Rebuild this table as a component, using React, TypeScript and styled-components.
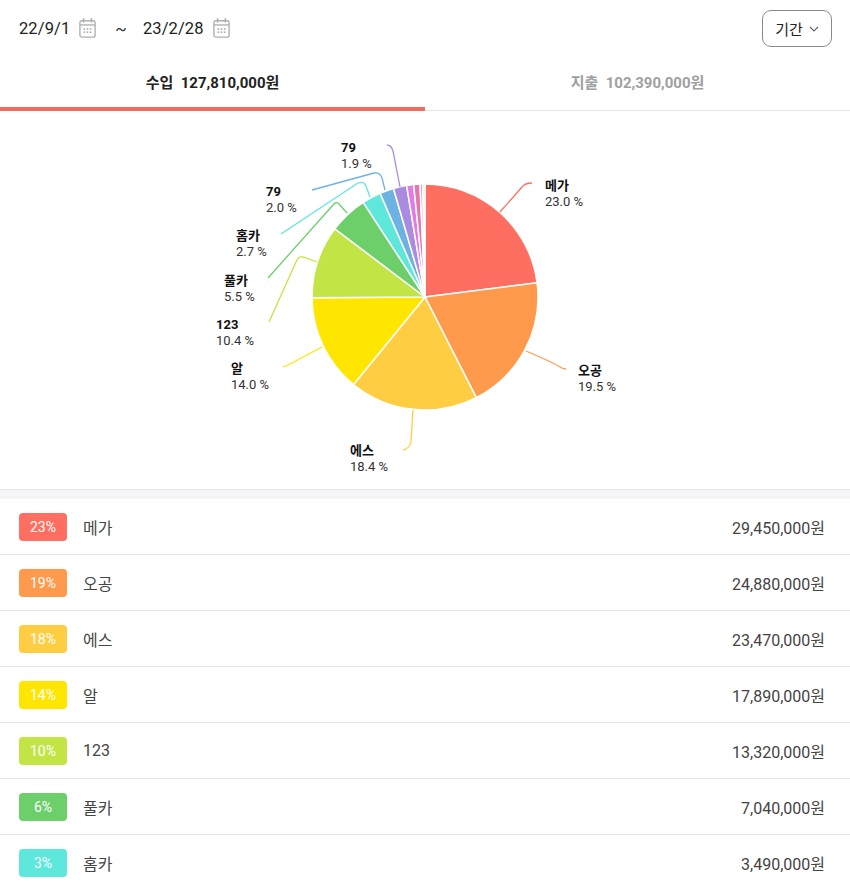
import styled, { createGlobalStyle } from 'styled-components';

const GlobalStyle = createGlobalStyle`
  html, body {
    margin: 0;
    padding: 0;
    background: #ffffff;
  }
  body {
    font-family: Roboto, "Noto Sans CJK KR", "Noto Sans", sans-serif;
    color: #222;
  }
  * { box-sizing: border-box; }
`;

type Item = {
  name: string;
  pct: number;
  amount: string;
  color: string;
};

const CX = 425;
const CY = 297;
const R = 113;

const slices: { pct: number; color: string }[] = [
  { pct: 23.0, color: '#ff6f61' },
  { pct: 19.5, color: '#ff994c' },
  { pct: 18.4, color: '#ffcd42' },
  { pct: 14.0, color: '#ffe600' },
  { pct: 10.4, color: '#c2e545' },
  { pct: 5.5, color: '#6ccf6a' },
  { pct: 2.7, color: '#5ee7db' },
  { pct: 2.0, color: '#6cb3e3' },
  { pct: 1.9, color: '#a98be0' },
  { pct: 1.0, color: '#e27be4' },
  { pct: 0.9, color: '#e07aae' },
  { pct: 0.4, color: '#f0a3b8' },
  { pct: 0.3, color: '#f7c6c6' },
];

const labels = [
  { name: '메가', pct: '23.0 %', x: 545, y: 185, color: '#ff6f61', d: 'M500,212 L522,187 Q525,183 532,183' },
  { name: '오공', pct: '19.5 %', x: 578, y: 370, color: '#ff994c', d: 'M526,351 Q552,362 560,367 Q563,369 566,369' },
  { name: '에스', pct: '18.4 %', x: 350, y: 450, color: '#ffcd42', d: 'M413,410 L411,442 Q410,448 403,450' },
  { name: '알', pct: '14.0 %', x: 231, y: 368, color: '#ffe600', d: 'M322,347 L290,364 Q286,366 283,367' },
  { name: '123', pct: '10.4 %', x: 216, y: 324, color: '#c2e545', d: 'M317,262 L303,257 Q298,256 296,262 L269,322' },
  { name: '풀카', pct: '5.5 %', x: 224, y: 280, color: '#6ccf6a', d: 'M347,213 L339,204 Q336,201 333,205 L268,278' },
  { name: '홈카', pct: '2.7 %', x: 236, y: 235, color: '#5ee7db', d: 'M370,197 L366,186 Q364,181 358,183 L281,234' },
  { name: '79', pct: '2.0 %', x: 266, y: 191, color: '#6cb3e3', d: 'M385,190 L382,178 Q380,172 374,173 L312,190' },
  { name: '79', pct: '1.9 %', x: 341, y: 147, color: '#a98be0', d: 'M400,187 L393,151 Q391,145 387,145' },
];

const items: Item[] = [
  { name: '메가', pct: 23, amount: '29,450,000원', color: '#ff6f61' },
  { name: '오공', pct: 19, amount: '24,880,000원', color: '#ff994c' },
  { name: '에스', pct: 18, amount: '23,470,000원', color: '#ffcd42' },
  { name: '알', pct: 14, amount: '17,890,000원', color: '#ffe600' },
  { name: '123', pct: 10, amount: '13,320,000원', color: '#c2e545' },
  { name: '풀카', pct: 6, amount: '7,040,000원', color: '#6ccf6a' },
  { name: '홈카', pct: 3, amount: '3,490,000원', color: '#5ee7db' },
];

const point = (frac: number) => {
  const a = frac * Math.PI * 2;
  return [CX + R * Math.sin(a), CY - R * Math.cos(a)];
};

const slicePath = (from: number, to: number) => {
  const [x1, y1] = point(from);
  const [x2, y2] = point(to);
  const large = to - from > 0.5 ? 1 : 0;
  return `M${CX},${CY} L${x1},${y1} A${R},${R} 0 ${large} 1 ${x2},${y2} Z`;
};

const CalendarIcon = () => (
  <svg width="17" height="20" viewBox="0 0 16 19" fill="none">
    <rect x="0.8" y="2.6" width="14.4" height="15.6" rx="1.8" stroke="#b0b0b0" strokeWidth="1.3" />
    <line x1="0.8" y1="6.6" x2="15.2" y2="6.6" stroke="#b0b0b0" strokeWidth="1.3" />
    <line x1="4.3" y1="0.8" x2="4.3" y2="3.8" stroke="#b0b0b0" strokeWidth="1.5" strokeLinecap="round" />
    <line x1="11.7" y1="0.8" x2="11.7" y2="3.8" stroke="#b0b0b0" strokeWidth="1.5" strokeLinecap="round" />
    {[5, 8, 11].map((x) =>
      [10.5, 13.5].map((y) => <rect key={`${x}-${y}`} x={x - 0.8} y={y - 0.8} width="1.6" height="1.6" fill="#b0b0b0" />)
    )}
  </svg>
);

const Chevron = () => (
  <svg width="10" height="6" viewBox="0 0 10 6" fill="none">
    <path d="M1 1 L5 5 L9 1" stroke="#666" strokeWidth="1.1" />
  </svg>
);

const App = () => {
  let acc = 0;
  return (
    <Page>
      <GlobalStyle />
      <Header>
        <DateGroup>
          <DateText>22/9/1</DateText>
          <CalendarIcon />
          <Tilde>~</Tilde>
          <DateText>23/2/28</DateText>
          <CalendarIcon />
        </DateGroup>
        <PeriodButton>
          기간 <Chevron />
        </PeriodButton>
      </Header>
      <Tabs>
        <Tab $active>수입&nbsp;&nbsp;127,810,000원</Tab>
        <Tab>지출&nbsp;&nbsp;102,390,000원</Tab>
      </Tabs>
      <ChartArea>
        <svg width="850" height="378" viewBox="0 111 850 378">
          {slices.map((s, i) => {
            const from = acc / 100;
            acc += s.pct;
            const to = acc / 100;
            return <path key={i} d={slicePath(from, to)} fill={s.color} stroke="#fff" strokeWidth="1.5" />;
          })}
          {labels.map((l, i) => (
            <g key={i}>
              <path d={l.d} fill="none" stroke={l.color} strokeWidth="1.3" />
              <ChartName x={l.x} y={l.y + 5}>
                {l.name}
              </ChartName>
              <ChartPct x={l.x} y={l.y + 21}>
                {l.pct}
              </ChartPct>
            </g>
          ))}
        </svg>
      </ChartArea>
      <Divider />
      <List>
        {items.map((it) => (
          <Row key={it.name}>
            <Badge $color={it.color}>{it.pct}%</Badge>
            <Name>{it.name}</Name>
            <Amount>{it.amount}</Amount>
          </Row>
        ))}
      </List>
    </Page>
  );
};
export default App;

const Page = styled.div`
  width: 850px;
  height: 888px;
  overflow: hidden;
  background: #fff;
`;

const Header = styled.header`
  height: 56px;
  display: flex;
  align-items: center;
  justify-content: space-between;
  padding: 1px 18px 0 19px;
`;

const DateGroup = styled.div`
  display: flex;
  align-items: center;
  gap: 9px;
  svg {
    margin-top: -1px;
  }
`;

const DateText = styled.span`
  font-size: 16.5px;
  color: #222;
  letter-spacing: 0.1px;
`;

const Tilde = styled.span`
  font-size: 17px;
  color: #333;
  margin: 0 7px 0 10px;
`;

const PeriodButton = styled.button`
  height: 37px;
  width: 70px;
  border: 1px solid #8a8a8a;
  border-radius: 9px;
  background: #fff;
  font-family: inherit;
  font-size: 15px;
  color: #222;
  display: flex;
  align-items: center;
  justify-content: center;
  gap: 6px;
  padding: 0;
`;

const Tabs = styled.nav`
  display: grid;
  grid-template-columns: 425px 1fr;
  height: 55px;
  border-bottom: 1px solid #e6e6e6;
`;

const Tab = styled.div<{ $active?: boolean }>`
  display: flex;
  align-items: center;
  justify-content: center;
  font-size: 15px;
  font-weight: 700;
  color: ${(p) => (p.$active ? '#222' : '#a0a0a0')};
  border-bottom: 4px solid ${(p) => (p.$active ? '#f26b5f' : 'transparent')};
  margin-bottom: -1px;
`;

const ChartArea = styled.section`
  height: 378px;
  svg {
    display: block;
  }
`;

const ChartName = styled.text`
  font-size: 13px;
  font-weight: 700;
  fill: #111;
`;

const ChartPct = styled.text`
  font-size: 13px;
  fill: #333;
`;

const Divider = styled.div`
  height: 10px;
  background: #f5f5f7;
  border-top: 1px solid #e6e6e6;
`;

const List = styled.ul`
  list-style: none;
  margin: 0;
  padding: 0;
`;

const Row = styled.li`
  height: 56px;
  display: flex;
  align-items: center;
  padding: 0 25px 0 19px;
  border-bottom: 1px solid #e4e4e4;
`;

const Badge = styled.span<{ $color: string }>`
  width: 48px;
  height: 28px;
  border-radius: 4px;
  background: ${(p) => p.$color};
  color: #fff;
  font-size: 14px;
  display: flex;
  align-items: center;
  justify-content: center;
`;

const Name = styled.span`
  margin-left: 16px;
  font-size: 16px;
  color: #444;
  flex: 1;
`;

const Amount = styled.span`
  font-size: 16px;
  color: #444;
`;
